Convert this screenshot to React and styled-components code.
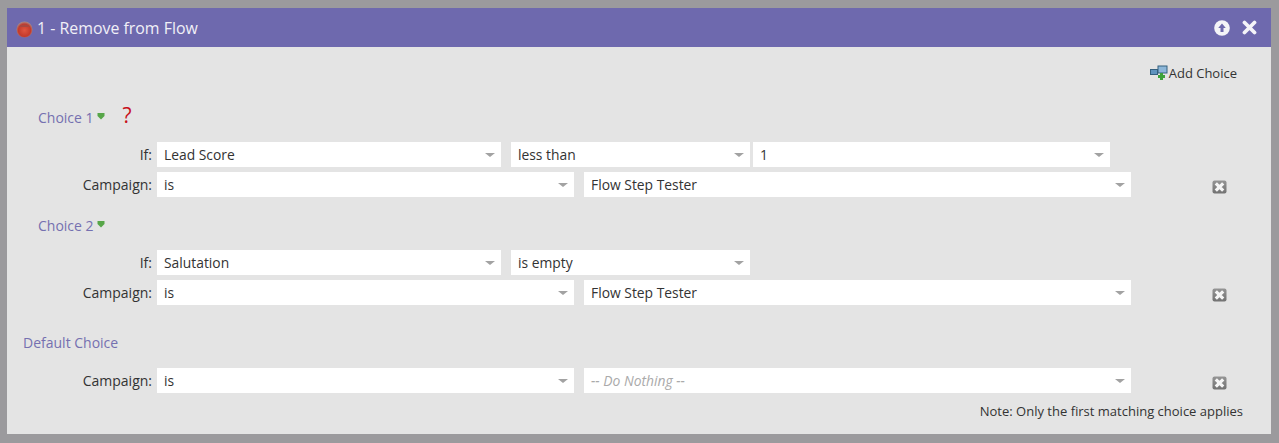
import React from "react";
import styled, { createGlobalStyle } from "styled-components";

const Global = createGlobalStyle`
  html, body { margin: 0; padding: 0; background: #9b9a9d; }
  body { font-family: "Open Sans", "Liberation Sans", sans-serif; }
`;
const Page = styled.div`
  width: 1279px; height: 443px; box-sizing: border-box; padding: 8px 8px 9px 7px; overflow: hidden;
`;
const Panel = styled.div`
  height: 426px; background: #e4e4e4; display: flex; flex-direction: column;
`;
const Header = styled.div`
  height: 39px; flex: none; background: #6e69ae; display: flex; align-items: center;
  padding: 0 14px 0 9px; color: #f1f0f7; font-size: 15.9px;
`;
const Ball = styled.svg`margin-top: 4px; flex: none;`;
const Title = styled.span`margin-left: 4px; flex: 1;`;
const HeaderIcons = styled.div`display: flex; align-items: center; gap: 12px;`;
const Body = styled.div`
  position: relative; flex: 1; display: flex; flex-direction: column; padding: 0 27px 0 16px;
`;
const TopBar = styled.div`
  display: flex; justify-content: flex-end; align-items: center; gap: 1px; height: 20px; margin-top: 16px;
  padding-right: 7px; font-size: 13px; color: #333;
`;
const Heading = styled.div`
  display: flex; align-items: center; height: 20px; font-size: 14px; color: #7570b0;
  margin-top: ${p => p.$top}px; padding-left: ${p => p.$indent}px;
`;
const Arrow = styled.svg`margin: 0 0 3px 3px;`;
const Help = styled.span`
  color: #c8101a; font-size: 21px; margin-left: 18px; line-height: 20px; position: relative; top: -2px;
  font-family: "Open Sans", sans-serif; font-weight: 400;
`;
const Row = styled.div`
  display: flex; align-items: center; height: 25px; margin-top: ${p => p.$top}px;
`;
const Label = styled.div`
  width: 129px; margin-right: 5px; text-align: right; font-size: 14px; color: #333; flex: none;
`;
const Select = styled.div`
  width: ${p => p.$w}px; margin-left: ${p => p.$gap || 0}px; height: 25px; flex: none; box-sizing: border-box;
  background: #fff; display: flex; align-items: center; justify-content: space-between;
  padding: 0 6px 0 7px; font-size: 13.85px; color: ${p => p.$muted ? "#aaa" : "#333"};
  font-style: ${p => p.$muted ? "italic" : "normal"};
`;
const Caret = styled.span`
  width: 0; height: 0; border-left: 5px solid transparent; border-right: 5px solid transparent;
  border-top: 4px solid #a2a2a2;
`;
const Remove = styled.svg`margin-left: 81px; margin-top: 5px; flex: none;`;
const Note = styled.div`
  text-align: right; font-size: 13px; color: #333; margin: 9px 1px 0 0;
`;

const Sel = ({ w, gap, muted, children }) => (
  <Select $w={w} $gap={gap} $muted={muted}><span>{children}</span><Caret /></Select>
);
const Del = () => (
  <Remove width="15" height="14" viewBox="0 0 15 14">
    <defs>
      <linearGradient id="delFill" x1="0" y1="0" x2="0" y2="1">
        <stop offset="0" stopColor="#959595" />
        <stop offset="1" stopColor="#727272" />
      </linearGradient>
    </defs>
    <rect x="0.5" y="0.5" width="14" height="13" rx="2" fill="url(#delFill)" />
    <path d="M3.8 3.3l7.4 7.4M11.2 3.3l-7.4 7.4" stroke="#f5f5f5" strokeWidth="3.2" />
  </Remove>
);
const Down = () => (
  <Arrow width="8" height="8" viewBox="0 0 8 8">
    <path d="M0.5 1h7v3L4 7.5 0.5 4z" fill="#57a648" />
  </Arrow>
);
const CampaignRow = ({ top, value, muted }) => (
  <Row $top={top}>
    <Label>Campaign:</Label>
    <Sel w={417}>is</Sel>
    <Sel w={547} gap={10} muted={muted}>{value}</Sel>
    <Del />
  </Row>
);

export default function App() {
  return (
    <Page>
      <Global />
      <Panel>
        <Header>
          <Ball width="17" height="17" viewBox="0 0 17 17">
            <defs>
              <radialGradient id="ball" cx="0.5" cy="0.55" r="0.55">
                <stop offset="0" stopColor="#e0553f" />
                <stop offset="0.7" stopColor="#c43a2c" />
                <stop offset="1" stopColor="#a5908f" />
              </radialGradient>
            </defs>
            <circle cx="8.5" cy="8.5" r="8" fill="url(#ball)" />
            <path d="M3 6a6 4 0 0 1 11 0z" fill="#a8473f" />
          </Ball>
          <Title>1 - Remove from Flow</Title>
          <HeaderIcons>
            <svg width="16" height="16" viewBox="0 0 16 16">
              <circle cx="8" cy="8" r="7.8" fill="#f4f4f8" />
              <path d="M8 3.5L11.8 8H9.5v4h-3V8H4.2z" fill="#6e69ae" />
            </svg>
            <svg width="15" height="15" viewBox="0 0 15 15">
              <path d="M2.5 2.5l10 10M12.5 2.5l-10 10" stroke="#f4f4f8" strokeWidth="3.8" strokeLinecap="round" />
            </svg>
          </HeaderIcons>
        </Header>
        <Body>
          <TopBar>
            <svg width="18" height="16" viewBox="0 0 18 16">
              <rect x="0.5" y="4.5" width="7" height="5" fill="#5f93bf" stroke="#34607f" />
              <rect x="8" y="1" width="9" height="7" fill="#8cb6d8" stroke="#34607f" />
              <path d="M11.5 8v7M8 11.5h7" stroke="#3da23a" strokeWidth="3" />
            </svg>
            <span>Add Choice</span>
          </TopBar>
          <Heading $top={24} $indent={15}>
            Choice 1<Down /><Help>?</Help>
          </Heading>
          <Row $top={15}>
            <Label>If:</Label>
            <Sel w={344}>Lead Score</Sel>
            <Sel w={239} gap={10}>less than</Sel>
            <Sel w={357} gap={3}>1</Sel>
          </Row>
          <CampaignRow top={5} value="Flow Step Tester" />
          <Heading $top={18} $indent={15}>Choice 2<Down /></Heading>
          <Row $top={15}>
            <Label>If:</Label>
            <Sel w={344}>Salutation</Sel>
            <Sel w={239} gap={10}>is empty</Sel>
          </Row>
          <CampaignRow top={5} value="Flow Step Tester" />
          <Heading $top={27} $indent={0}>Default Choice</Heading>
          <CampaignRow top={16} value="-- Do Nothing --" muted />
          <Note>Note: Only the first matching choice applies</Note>
        </Body>
      </Panel>
    </Page>
  );
}
